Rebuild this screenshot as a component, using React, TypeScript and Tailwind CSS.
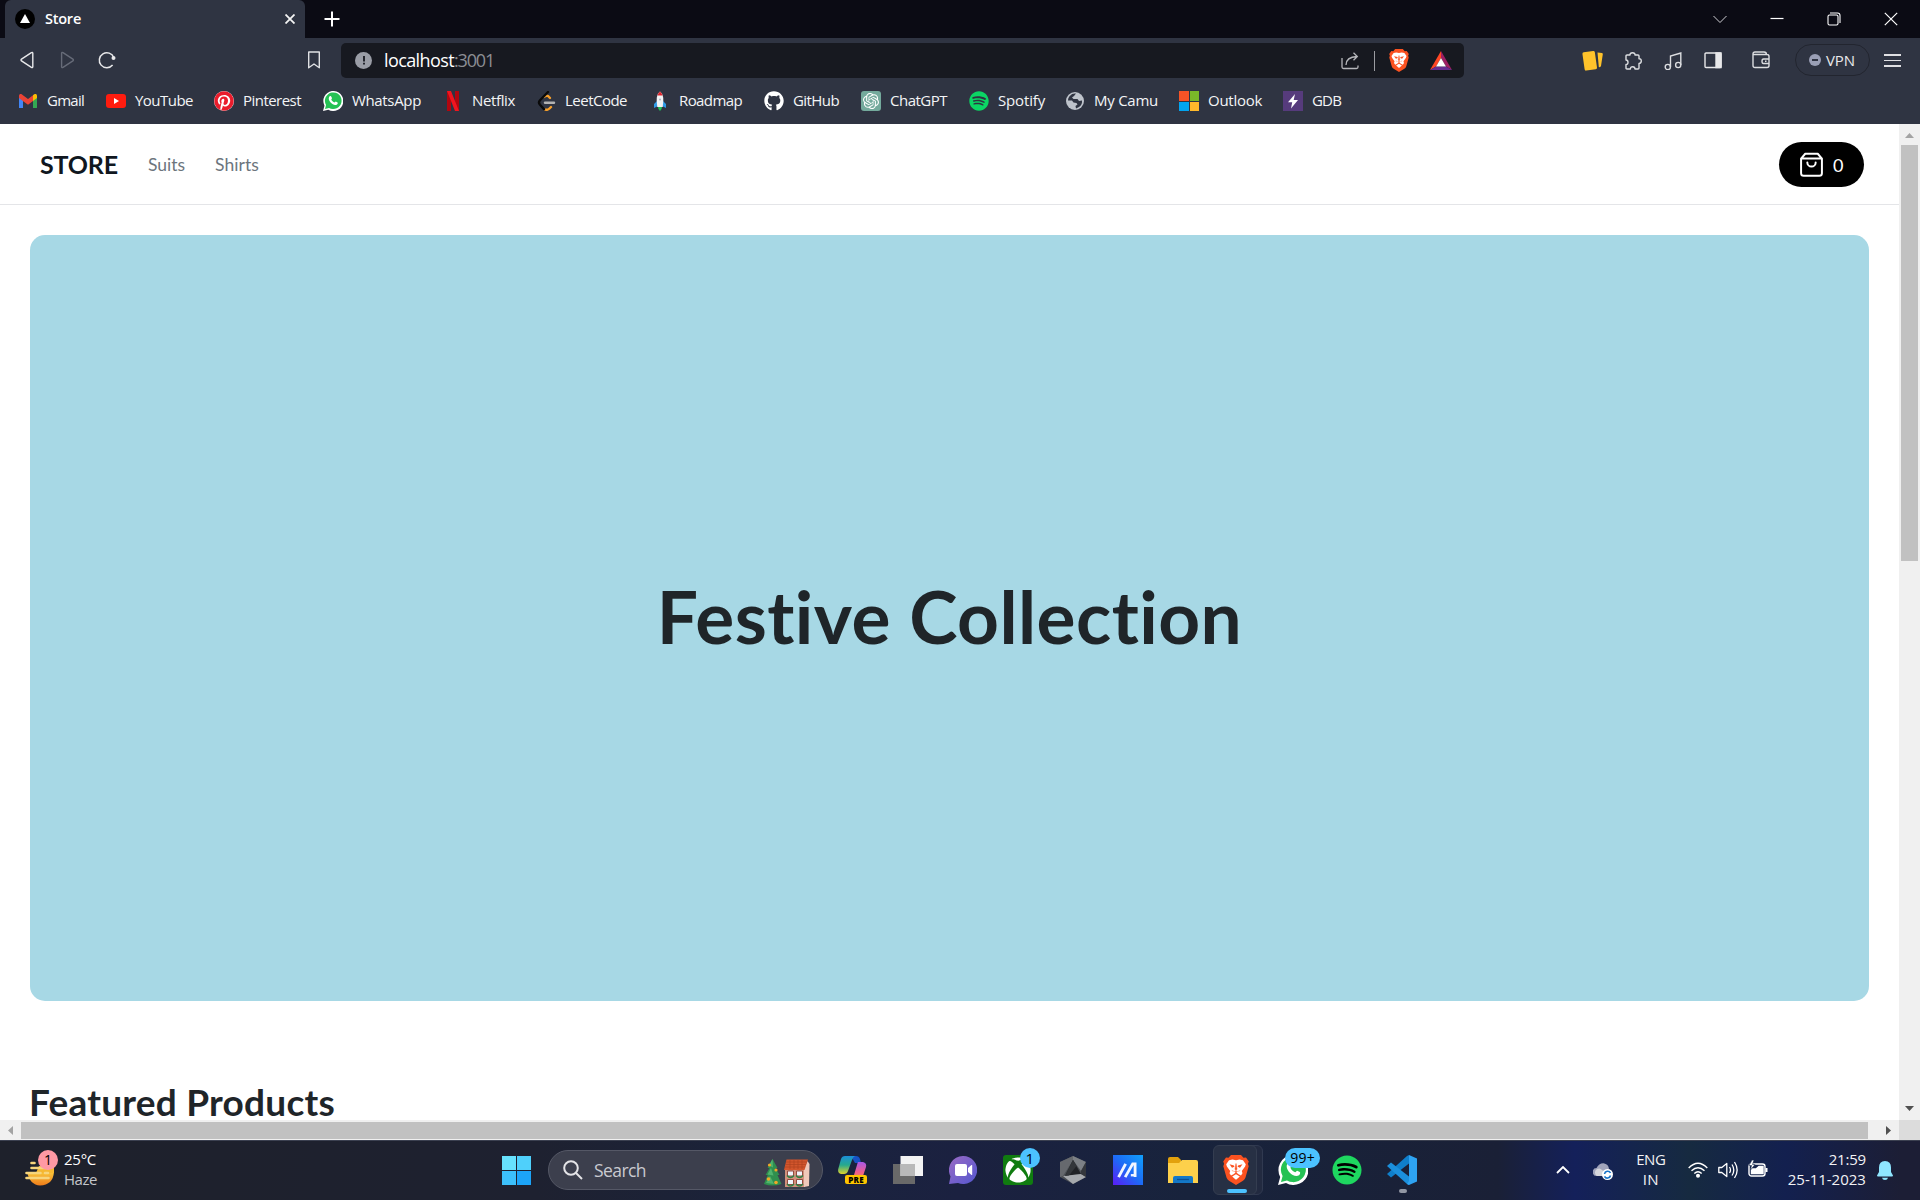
import { useLayoutEffect, useRef } from "react";
import type { ReactNode } from "react";
import { FaGithub, FaSpotify, FaPinterest, FaXbox } from "react-icons/fa";
import { SiOpenai } from "react-icons/si";

/* Tracks a run of text so that it fills the given width. */
function Fit({ w, className = "", children }: { w: number; className?: string; children: string }) {
  const ref = useRef<HTMLSpanElement>(null);
  useLayoutEffect(() => {
    const el = ref.current;
    if (!el) return;
    el.style.letterSpacing = "0px";
    const natural = el.getBoundingClientRect().width;
    el.style.letterSpacing = `${(w - natural) / children.length}px`;
  }, [w, children]);
  return (
    <span ref={ref} className={`inline-block shrink-0 whitespace-nowrap ${className}`}>
      {children}
    </span>
  );
}

function WhatsAppLogo({ className }: { className: string }) {
  return (
    <svg viewBox="0 0 30 30" className={className}>
      <path d="M0 30 2.2 22A15 15 0 1 1 8 28Z" fill="#fff" />
      <path d="M3 27 4.6 21A12.5 12.5 0 1 1 9 25.4Z" fill="#25c254" />
      <path d="M10 8c1-1 2-.7 2.500.5l.9 2c.3.800-.8 1.600-1 2.200.8 2 2.700 3.700 4.800 4.600.7-.1 1.400-1.600 2-1.500l2.600 1.300c.8.500.2 2.400-.8 3.100-3 2-7-.2-9.200-2.500C9.400 15.300 7.200 11 10 8Z" fill="#fff" />
    </svg>
  );
}

function BraveLogo({ className }: { className: string }) {
  return (
    <svg viewBox="0 0 26 30" className={className}>
      <path d="M8 0h10l2.500 2.800 2.500-.3 2.800 4-.9 2.300.8 2.400-3.200 11.300q-.6 2-2.500 3.300L13 30l-7-4.200q-1.900-1.300-2.500-3.300L.3 11.200l.8-2.400-.9-2.300 2.800-4 2.500.3Z" fill="#fb5220" />
      <path d="M13 5.200 16.500 4.500 20 5.200l2.800 4-.7 2.300-3.300 4.500.7 2.200-1.500 2.300-2.500-1.300-2.500-2-2.500 2L8 20.500l-1.500-2.300.7-2.200-3.300-4.500-.7-2.300 2.800-4 3.500-.7Z" fill="#fff" />
      <path d="m13 19.200 3.800 2.300q-2 1.800-3.800 3.300-1.800-1.500-3.800-3.300Z" fill="#fff" />
      <path d="M6.500 9.300 11 10.500l.4 1.200-2.400 1ZM19.500 9.300 15 10.500l-.4 1.200 2.400 1ZM11 16.200h4L13 18Z" fill="#fb5220" />
      <path d="M13 8.500 12 14l1 1.800L14 14ZM8.800 15.500l2 .8M17.200 15.500l-2 .8" fill="#fb5220" stroke="#fb5220" strokeWidth=".5" />
    </svg>
  );
}

const bookmarks: { label: string; cell: string; text: number; icon: ReactNode }[] = [
  {
    label: "Gmail", cell: "w-[88px]", text: 37,
    icon: (
      <svg viewBox="0 0 20 20" className="size-5">
        <path d="M1 17V6l4 3v8Z" fill="#4285f4" />
        <path d="M15 17V9l4-3v10.500q0 .5-.7.5Z" fill="#34a853" />
        <path d="M1 7V5c0-2 1.800-2.400 3-1.500l6 4.600 6-4.600-1 6.500-5 3.800L4.800 10Z" fill="#ea4335" />
        <path d="M15 4.300V10l4-3V5c0-2-1.800-2.400-3-1.500Z" fill="#fbbc04" />
      </svg>
    ),
  },
  {
    label: "YouTube", cell: "w-[108px]", text: 58,
    icon: (
      <svg viewBox="0 0 20 20" className="size-5">
        <rect y="3" width="20" height="14" rx="3" fill="#ff1c0f" />
        <path d="m8 7 5 3-5 3Z" fill="#fff" />
      </svg>
    ),
  },
  {
    label: "Pinterest", cell: "w-[109px]", text: 58,
    icon: <span className="block size-5 rounded-full bg-white"><FaPinterest className="size-5 text-[#ea1c2c]" /></span>,
  },
  { label: "WhatsApp", cell: "w-[120px]", text: 69, icon: <WhatsAppLogo className="size-5" /> },
  {
    label: "Netflix", cell: "w-[93px]", text: 43,
    icon: (
      <svg viewBox="0 0 20 20" className="size-5">
        <path d="M4 0h4v20H4Zm8 0h4v20h-4Z" fill="#b1060f" />
        <path d="M4 0h4l8 20h-4Z" fill="#f0151f" />
      </svg>
    ),
  },
  {
    label: "LeetCode", cell: "w-[114px]", text: 62,
    icon: (
      <svg viewBox="0 0 20 20" className="size-5" fill="none" strokeWidth="2.400" strokeLinecap="round">
        <path d="m14 7-2-2q-2-1-4 1" stroke="#f9a12b" />
        <path d="m15 16-1.500 1.500q-2 2-4.500 1" stroke="#f9a12b" />
        <path d="M12 1 4 9.200q-2 2.300 0 4.600l4 4.300" stroke="#0a0a0a" />
        <path d="M9 11.800h9" stroke="#b3b3b3" />
      </svg>
    ),
  },
  {
    label: "Roadmap", cell: "w-[114px]", text: 63,
    icon: (
      <svg viewBox="0 0 20 20" className="size-5">
        <path d="m7 10-3 3v4l3-1.500ZM13 10l3 3v4l-3-1.500Z" fill="#2f9be8" />
        <path d="M10 .5c2.500 2 3.500 5 3.300 9L12.800 16H7.200l-.5-6.500c-.2-4 .8-7 3.300-9Z" fill="#f1f3f5" />
        <path d="M10 .5q1.800 1.500 2.600 4H7.400q.8-2.500 2.600-4Z" fill="#e0262d" />
        <circle cx="10" cy="8.500" r="1" fill="#aab4c0" />
        <path d="M8 16h4q0 2.500-2 4-2-1.500-2-4Z" fill="#21c45a" />
      </svg>
    ),
  },
  { label: "GitHub", cell: "w-[97px]", text: 46, icon: <FaGithub className="size-5 text-white" /> },
  {
    label: "ChatGPT", cell: "w-[108px]", text: 57,
    icon: (
      <span className="flex size-5 items-center justify-center rounded-[3px] bg-[#74aa9c]">
        <SiOpenai className="size-4 text-white" />
      </span>
    ),
  },
  {
    label: "Spotify", cell: "w-[96px]", text: 47,
    icon: <FaSpotify className="size-5 text-[#0bd664]" />,
  },
  {
    label: "My Camu", cell: "w-[114px]", text: 64,
    icon: (
      <svg viewBox="0 0 20 20" className="size-5">
        <circle cx="10" cy="10" r="9" fill="#bec3cb" />
        <path d="M3 9.500Q3 6 6 4l1-1q2-.8 4-.5L9 5 7 6.500 8.500 8h4l1.500 2 3-.5q.5 4-3 6.500l-3 1.500-.5-2.500 2-1.500-1-1.500-3-.5L7 9.500Z" fill="#2f3442" />
      </svg>
    ),
  },
  {
    label: "Outlook", cell: "w-[104px]", text: 54,
    icon: (
      <span className="grid size-5 grid-cols-2 gap-[1px]">
        <span className="bg-[#f65326]" /><span className="bg-[#7ab929]" />
        <span className="bg-[#02a4ef]" /><span className="bg-[#ffb92b]" />
      </span>
    ),
  },
  {
    label: "GDB", cell: "w-[80px]", text: 29,
    icon: (
      <span className="flex size-5 items-center justify-center bg-[#563b7c]">
        <svg viewBox="0 0 20 20" className="size-5" fill="#fff"><path d="M12 3 5 11.300h4.200L8 17.500l7-8.500h-4.300Z" /></svg>
      </span>
    ),
  },
];

function TitleBar() {
  return (
    <div className="flex h-[38px] items-center bg-[#0b0b14]">
      <div className="ml-[5px] flex h-full w-[300px] items-center rounded-t-md bg-[#2f3442]">
        <span className="ml-[10px] flex size-5 items-center justify-center rounded-full bg-black">
          <svg viewBox="0 0 10 9" className="mb-0.5 h-[9px] w-[10px]" fill="#fff"><path d="m5 0 5 9H0Z" /></svg>
        </span>
        <Fit w={36} className="ml-[10px] text-[14.500px] leading-5 font-semibold text-white">Store</Fit>
        <svg viewBox="0 0 10 10" className="mr-[10px] ml-auto size-[10px]" stroke="#f3f3f3" strokeWidth="1.800"><path d="m.5.5 9 9m0-9-9 9" /></svg>
      </div>
      <svg viewBox="0 0 16 16" className="ml-[19px] size-4" stroke="#fff" strokeWidth="2"><path d="M8 .5v15M.5 8h15" /></svg>
      <div className="mr-[22px] ml-auto flex items-center gap-[43px]">
        <svg viewBox="0 0 14 14" className="size-[14px]" fill="none" stroke="#d0d0d3"><path d="m.5 4 6.500 6.500L13.500 4" /></svg>
        <svg viewBox="0 0 14 14" className="size-[14px]" stroke="#fff" strokeWidth="1.200"><path d="M.5 6.500h13" /></svg>
        <svg viewBox="0 0 14 14" className="size-[14px]" fill="none" stroke="#fff" strokeWidth="1.100">
          <rect x="1" y="3" width="10" height="10" rx="1.500" /><path d="M3 1h7.500Q13 1 13 3.500V11" />
        </svg>
        <svg viewBox="0 0 14 14" className="size-[14px]" stroke="#fff" strokeWidth="1.200"><path d="m.8.8 12.400 12.400m0-12.400L.8 13.200" /></svg>
      </div>
    </div>
  );
}

function Toolbar() {
  return (
    <div className="flex h-[45px] items-center bg-[#2f3442]">
      <svg viewBox="0 0 18 18" className="mb-px ml-[18px] size-[18px]" fill="none" stroke="#e8e8ea" strokeWidth="1.400" strokeLinejoin="round"><path d="M14.800 2.200v13.600q-.2 1.200-1.400.600L3.500 9.900q-1-.9 0-1.800l9.900-6.500q1.200-.6 1.400.6Z" /></svg>
      <svg viewBox="0 0 18 18" className="mb-px ml-[22px] size-[18px]" fill="none" stroke="#666b78" strokeWidth="1.400" strokeLinejoin="round"><path d="M3.600 2.200v13.600q.2 1.200 1.400.600l9.900-6.500q1-.9 0-1.800L5 1.600Q3.800 1 3.600 2.200Z" /></svg>
      <svg viewBox="0 0 18 18" className="mb-px ml-[22px] size-[18px]" fill="none" stroke="#e8e8ea" strokeWidth="1.500"><path d="M14.600 14a7.500 7.500 0 1 1 1.200-7.500" /><circle cx="15.500" cy="7" r="2" fill="#e8e8ea" stroke="none" /></svg>
      <svg viewBox="0 0 12 18" className="mb-px ml-[192px] h-[18px] w-3" fill="none" stroke="#e0e1e4" strokeWidth="1.400" strokeLinejoin="round"><path d="M.7 1h10.600v15.800L6 13 .7 16.800Z" /></svg>
      <div className="ml-[21px] flex h-[35px] w-[1123px] items-center rounded-[5px] bg-[#171920]">
        <span className="ml-[14px] flex size-[17px] items-center justify-center rounded-full bg-[#9a9da6]">
          <svg viewBox="0 0 4 10" className="h-[9px] w-1" fill="#171920"><path d="M1 0h2v6H1ZM1 7.500h2v2H1Z" /></svg>
        </span>
        <Fit w={70} className="mb-px ml-3 text-[18px] leading-6 text-white">localhost</Fit>
        <Fit w={40} className="mb-px text-[18px] leading-6 text-[#8b8d93]">:3001</Fit>
        <svg viewBox="0 0 18 18" className="ml-auto size-[18px]" fill="none" stroke="#b5b6ba" strokeWidth="1.300">
          <path d="M1 6v9q0 1.500 1.500 1.500h13Q17 16.500 17 15v-1.500M5 13q0-8 11-8.500M12.500.8 16.300 4.500l-3.800 3.700" />
        </svg>
        <span className="ml-[15px] h-5 w-px bg-[#9b9ca1]" />
        <BraveLogo className="ml-[14px] h-[23px] w-5" />
        <svg viewBox="0 0 22 19" className="mr-[12px] ml-[21px] h-[19px] w-[22px]">
          <path d="M11 0 0 19l6-3.500L11 7Z" fill="#ff4724" /><path d="m11 0 11 19-6-3.500L11 7Z" fill="#9e1f63" />
          <path d="M0 19h22l-6-3.500H6Z" fill="#662d91" /><path d="m11 7 5 8.500H6Z" fill="#fff" />
        </svg>
      </div>
      <svg viewBox="0 0 22 22" className="ml-[118px] size-[22px]" fill="#ffc32b">
        <rect x="1.500" y="1.500" width="12.500" height="18.500" rx="1.500" transform="rotate(-8 8 11)" />
        <path d="M15.500 2.500 20 3q1 .2.800 1.200L19 16q-.5 1.500-2.200 1Z" />
      </svg>
      <svg viewBox="0 0 18 18" className="ml-5 size-[18px]" fill="none" stroke="#dcdde0" strokeWidth="1.400" strokeLinejoin="round">
        <path d="M2 4q0-1 1-1h3q-.2-2.200 2.500-2.200T11 3h3q1 0 1 1v2.800q2.300-.1 2.300 2.300T15 11.500V16q0 1-1 1h-3q0-2.200-2.300-2.200T6.400 17H3q-1 0-1-1v-3.500q2 0 2-2.200T2 8Z" />
      </svg>
      <svg viewBox="0 0 18 18" className="ml-[22px] size-[18px]" fill="none" stroke="#dcdde0" strokeWidth="1.400"><path d="M6.500 15V4l10.300-3v12" /><circle cx="3.800" cy="15" r="2.600" /><circle cx="14.200" cy="13" r="2.600" /></svg>
      <svg viewBox="0 0 18 18" className="mb-px ml-[22px] size-[18px]" fill="none" stroke="#e8e8ea" strokeWidth="1.400"><rect x="1" y="2" width="16" height="14.500" rx="1" /><path d="M12 2h5v14.500h-5Z" fill="#e8e8ea" /></svg>
      <svg viewBox="0 0 18 18" className="mb-px ml-[30px] size-[18px]" fill="none" stroke="#dcdde0" strokeWidth="1.400">
        <path d="M1 3q0-2 2-2h9q2.500 0 2.500 2.500M1 3.500h14q2 0 2 2v9q0 2-2 2H3q-2 0-2-2ZM17 8h-5.500Q10 8 10 10.200t1.500 2.300H17Zm-4 2.200h1.500" />
      </svg>
      <div className="mb-px ml-[25px] flex h-8 w-[75px] items-center rounded-full border border-[#22252f]">
        <span className="ml-[13px] flex size-3 items-center justify-center rounded-full bg-[#9a9fb5]"><span className="h-[1.500px] w-1.5 bg-[#2f3442]" /></span>
        <Fit w={29} className="mb-px ml-[5px] text-[15px] leading-5 text-[#e9e9eb]">VPN</Fit>
      </div>
      <div className="ml-[14px] flex w-[17px] flex-col gap-1">
        <span className="h-[1.500px] bg-[#e0e0e3]" /><span className="h-[1.500px] bg-[#e0e0e3]" /><span className="h-[1.500px] bg-[#e0e0e3]" />
      </div>
    </div>
  );
}

function Bookmarks() {
  return (
    <div className="flex h-[41px] bg-[#2f3442] pt-2 pl-[18px]">
      {bookmarks.map((b) => (
        <div key={b.label} className={`flex h-5 shrink-0 items-center gap-[10px] ${b.cell}`}>
          <span className="flex size-5 shrink-0 items-center justify-center">{b.icon}</span>
          <Fit w={b.text} className="-ml-px mb-[2px] text-[15px] leading-5 text-[#f4f4f6]">{b.label}</Fit>
        </div>
      ))}
    </div>
  );
}

function StorePage() {
  return (
    <main className="h-[996px] flex-1 overflow-hidden bg-white font-['Lato',sans-serif]">
      <header className="flex h-[81px] items-center border-b border-[#e4e5e8] pr-[35px] pl-[40px]">
        <Fit w={78} className="text-[25px] leading-8 font-bold text-[#10171f]">STORE</Fit>
        <Fit w={37} className="mt-[2px] ml-[30px] text-[17.500px] leading-6 text-[#6c757d]">Suits</Fit>
        <Fit w={44} className="mt-[2px] ml-[30px] text-[17.500px] leading-6 text-[#6c757d]">Shirts</Fit>
        <button className="ml-auto flex h-[45px] w-[85px] items-center rounded-full bg-black pl-[20px] text-white">
          <svg viewBox="0 0 24 24" className="size-[25px]" fill="none" stroke="#fff" strokeWidth="1.900" strokeLinecap="round" strokeLinejoin="round">
            <path d="M6 1.700h12l4 4.600v14a2.500 2.500 0 0 1-2.500 2.500h-15A2.500 2.500 0 0 1 2 20.300v-14ZM2 6.300h20M16 10a4 4 0 0 1-8 0" />
          </svg>
          <Fit w={11} className="mt-px ml-[9px] text-[18px] leading-6">0</Fit>
        </button>
      </header>
      <section className="mx-[30px] mt-[30px] flex h-[766px] items-center justify-center rounded-[15px] bg-[#a7d8e5]">
        <Fit w={588} className="mb-1 text-[73px] leading-[80px] font-bold text-[#1f2529]">Festive Collection</Fit>
      </section>
      <h2 className="mt-[83px] ml-[29px] h-[35px] leading-[35px] text-[#1f2529]">
        <Fit w={306} className="text-[37px] font-bold">Featured Products</Fit>
      </h2>
    </main>
  );
}

function VerticalScrollbar() {
  return (
    <div className="flex w-[21px] flex-col items-center bg-[#f0f0f0]">
      <svg viewBox="0 0 9 5" className="mt-[9px] h-[5px] w-[9px]" fill="#a3a3a3"><path d="m4.500 0 4.500 5H0Z" /></svg>
      <div className="mt-[7px] h-[416px] w-[17px] bg-[#c1c1c1]" />
      <svg viewBox="0 0 9 5" className="mt-auto mb-[9px] h-[5px] w-[9px]" fill="#505050"><path d="M0 0h9L4.500 5Z" /></svg>
    </div>
  );
}

function HorizontalScrollbar() {
  return (
    <div className="flex h-5 items-center bg-[#f0f0f0]">
      <svg viewBox="0 0 5 9" className="ml-2 h-[9px] w-[5px]" fill="#a3a3a3"><path d="M5 0v9L0 4.500Z" /></svg>
      <div className="mt-px ml-2 h-[17px] w-[1847px] bg-[#c1c1c1]" />
      <svg viewBox="0 0 5 9" className="ml-[18px] h-[9px] w-[5px]" fill="#505050"><path d="M0 0v9l5-4.500Z" /></svg>
      <div className="ml-auto h-full w-[21px] bg-[#dcdcdc]" />
    </div>
  );
}

function TreeAndHouse() {
  return (
    <svg viewBox="0 0 48 32" className="h-8 w-12">
      <path d="M9.500 2 4.500 11h2l-4 7h2.200L1 27q8 3 17.500 0L14.500 18h2L12.500 11h2Z" fill="#2f8f4e" />
      <path d="M9.500 2 6 8.500l4 2ZM8 11l-3.500 6.500 6 1ZM7 19l-4 7 8 1Z" fill="#4fb36d" />
      <g fill="#f0a728"><circle cx="6.500" cy="8" r="1.600" /><circle cx="13" cy="13" r="1.600" /><circle cx="5.500" cy="22" r="1.800" /><circle cx="13" cy="25.500" r="1.800" /></g>
      <path d="M22 12h20v18H22Z" fill="#d0917c" />
      <path d="m41 12 3.500-8 2 3-.5 22-5 1Z" fill="#efc8ba" />
      <path d="M23.500 2.500H45L41.500 13H21Z" fill="#d2552c" />
      <path d="M23 5h21M22.500 7.500h20.500M22 10h20M27 3v9M31 3v9M35 3v9M39 3v9" stroke="#b04420" strokeWidth=".7" />
      <g fill="#eef4fb" stroke="#8c3c33" strokeWidth=".9"><path d="M24.500 14h6v5h-6ZM33.500 14h6v5h-6ZM24.500 22.500h6v5h-6ZM33.500 22.500h6v5h-6Z" /></g>
      <path d="M24 18.500q3.500 4 7 0M33 18.500q3.500 4 7 0M24 27q3.500 4 7 0M33 27q3.500 4 7 0" fill="none" stroke="#2f8247" strokeWidth="1.500" />
    </svg>
  );
}

function Cell({ children }: { children: ReactNode }) {
  return <div className="relative flex h-[60px] w-[54.900px] shrink-0 items-center justify-center">{children}</div>;
}

function Taskbar() {
  return (
    <footer className="flex h-[60px] items-center border-t border-[#3b4050] bg-[linear-gradient(90deg,#1e212b_0%,#1e2130_28%,#1a233d_42%,#1b2140_50%,#18233c_62%,#1a2036_78%,#14205a_82%,#162a40_88%,#13204f_93%,#1c1e35_99%)] pb-px">
      <div className="relative ml-6 size-[38px]">
        <svg viewBox="0 0 38 38" className="size-[38px]">
          <defs><linearGradient id="sun" x2="0" y2="1"><stop stopColor="#f8c73b" /><stop offset="1" stopColor="#ef7c1a" /></linearGradient></defs>
          <path d="M3 21h27q-1 13-14 13.500Q6 34 3 21Z" fill="url(#sun)" />
          <path d="M15 15h15v7H12Z" fill="#f5b731" />
          <path d="M7.500 12h3M7.500 17h16M2.500 22h14m4.500 0h3M2.500 27h22" stroke="#f7d57c" strokeWidth="2.600" strokeLinecap="round" />
        </svg>
        <span className="absolute -top-px left-[14px] flex size-5 items-center justify-center rounded-full bg-[#ff99a4] text-[14px] leading-5 text-black">1</span>
      </div>
      <div className="mb-[3px] ml-[2px] flex w-[60px] flex-col items-start">
        <Fit w={32} className="text-[15px] leading-5 text-white">25°C</Fit>
        <Fit w={33} className="text-[15px] leading-5 text-[#c4c6cb]">Haze</Fit>
      </div>
      <div className="ml-[378px] grid size-[29px] grid-cols-2 gap-px">
        <span className="bg-[#67e2fd]" /><span className="bg-[#4fd0fb]" /><span className="bg-[#3cc0fb]" /><span className="bg-[#1ca4f8]" />
      </div>
      <div className="ml-[17px] flex h-10 w-[275px] items-center rounded-full border border-[#555866] bg-[#3c3f4d]">
        <svg viewBox="0 0 20 20" className="ml-[14px] size-5" fill="none" stroke="#e4e4e7" strokeWidth="2"><circle cx="8" cy="8" r="6.800" /><path d="m13 13 6 6" /></svg>
        <Fit w={52} className="mb-px ml-[11px] text-[17.500px] leading-6 text-[#c9cad0]">Search</Fit>
        <span className="mt-1.5 mr-[11px] ml-auto"><TreeAndHouse /></span>
      </div>
      <div className="ml-[3px] flex">
        <Cell>
          <svg viewBox="0 0 30 28" className="h-7 w-[30px]">
            <defs>
              <linearGradient id="cpa" x2="0" y2="1"><stop stopColor="#1b8ed8" /><stop offset=".5" stopColor="#26a98d" /><stop offset="1" stopColor="#dfd22b" /></linearGradient>
              <linearGradient id="cpb" x2="0" y2="1"><stop stopColor="#a558e8" /><stop offset=".6" stopColor="#ee5e8d" /><stop offset="1" stopColor="#f38a50" /></linearGradient>
            </defs>
            <path d="M13 0h5q3 0 4 3l1 4h-6Z" fill="#1652c4" />
            <path d="M7 0h10q-2 1-3 4l-4 11q-1 3-4 3H3q-4-1-2.500-6L3 3q1-3 4-3Z" fill="url(#cpa)" />
            <path d="M20 6h5q4 1 3 5l-3 9q-1 3-4 3h-8q2-1 3-4l3-10q.5-2 1-3Z" fill="url(#cpb)" />
          </svg>
          <span className="absolute top-[35px] left-[19px] flex h-[9px] w-[22px] items-center justify-center rounded-[2px] bg-[#fdc500] text-[8px] leading-[9px] font-extrabold tracking-wide text-black">PRE</span>
        </Cell>
        <Cell>
          <svg viewBox="0 0 30 28" className="h-7 w-[30px]"><path d="M0 8h22v20H0Z" fill="#696969" /><path d="M7.500 0H30v20H7.500Z" fill="#f3f3f3" /><path d="M7.500 8H22v12H7.500Z" fill="#b9b9b9" /></svg>
        </Cell>
        <Cell>
          <svg viewBox="0 0 28 28" className="size-7">
            <defs><linearGradient id="chat" x1="0" y1="0" x2="1" y2="1"><stop stopColor="#9a6ac4" /><stop offset="1" stopColor="#5457d0" /></linearGradient></defs>
            <path d="M14 0a14 14 0 1 1-5 27L0 28l1.500-7.500A14 14 0 0 1 14 0Z" fill="url(#chat)" />
            <rect x="6" y="8" width="12" height="12" rx="2" fill="#fff" /><path d="m19 12 3.500-3q.7-.3.700.5v9q0 .8-.7.5L19 16Z" fill="#fff" />
          </svg>
        </Cell>
        <Cell>
          <span className="flex size-[30px] items-center justify-center rounded-[3px] bg-[#107c10]"><FaXbox className="size-[26px] text-white" /></span>
          <span className="absolute top-[8px] left-[29px] flex size-5 items-center justify-center rounded-full bg-[#4cc2ff] text-[15px] leading-5 text-black">1</span>
        </Cell>
        <Cell>
          <svg viewBox="0 0 26 28" className="h-7 w-[26px]">
            <path d="m13 0 13 6v15l-13 7-13-7V6Z" fill="#4c5055" /><path d="m13 0 13 6-5 9-8-11Z" fill="#7c8085" /><path d="m0 6 13-6v4L3 20l-3 1Z" fill="#66696e" />
            <path d="m13 4 8 14-16 2Z" fill="#202226" /><path d="m3 20 18-2 5 3-13 7Z" fill="#a6a9ad" /><path d="m21 15 5-9v15l-5-3Z" fill="#34373c" /><path d="m13 4 3.500 6L9 19.500l-4 .5Z" fill="#33363a" />
          </svg>
        </Cell>
        <Cell>
          <span className="flex size-[30px] items-center justify-center bg-[linear-gradient(45deg,#5b1cf5,#1d6bf6_50%,#10a0fb)]">
            <svg viewBox="0 0 24 18" className="h-[17px] w-6" fill="none" stroke="#f0f6ff" strokeWidth="3"><path d="M2 16 9.500 2M9 16 17 2h2.500v14" /><path d="M15 14h4" strokeWidth="2.500" /></svg>
          </span>
        </Cell>
        <Cell>
          <svg viewBox="0 0 30 27" className="h-[27px] w-[30px]">
            <path d="M0 2q0-2 2-2h8l3 3v4H0Z" fill="#e2a10d" /><path d="M0 6h11l3-3h14q2 0 2 2v21H0Z" fill="#fdd04b" />
            <path d="M5 21q0-2 2-2h16q2 0 2 2v5H5Z" fill="#1478c8" /><path d="M9 22.500h12" stroke="#0a4f95" strokeWidth="1.300" />
          </svg>
        </Cell>
        <Cell>
          <span className="absolute top-[5px] left-[9px] h-[50px] w-[44px] rounded-r-md border border-[#303950] bg-[#222a40]" />
          <span className="absolute top-[5px] left-[3px] h-[50px] w-[44px] rounded-md border border-[#343d50] bg-[#273044]" />
          <span className="relative mr-[4px]"><BraveLogo className="h-[30px] w-[26px]" /></span>
          <span className="absolute top-[49px] left-[17px] h-1 w-5 rounded-full bg-[#4cc2ff]" />
        </Cell>
        <Cell>
          <WhatsAppLogo className="size-[30px]" />
          <span className="absolute top-[8px] left-[20px] flex h-5 w-[35px] items-center justify-center rounded-full bg-[#4cc2ff] text-black"><Fit w={25} className="text-[14px] leading-5">99+</Fit></span>
        </Cell>
        <Cell><span className="flex size-7 items-center justify-center rounded-full bg-black"><FaSpotify className="size-[30px] shrink-0 text-[#1ed760]" /></span></Cell>
        <Cell>
          <svg viewBox="0 0 30 30" className="size-[30px]">
            <path d="m22 8.500-18 14L0 19l20-18 2-1Z" fill="#0f7fcb" /><path d="m22 21.500-18-14L0 11l20 18 2 1Z" fill="#1b8fdc" />
            <path d="m22 0 8 3.500v23L22 30l-2-1 2-3Z" fill="#2ea3f2" />
          </svg>
          <span className="absolute top-[49px] left-[24px] h-1 w-2 rounded-full bg-[#9297a3]" />
        </Cell>
      </div>
      <svg viewBox="0 0 14 8" className="mb-px ml-[126px] h-2 w-[14px]" fill="none" stroke="#fff" strokeWidth="1.800"><path d="m1 7 6-6 6 6" /></svg>
      <svg viewBox="0 0 20 18" className="mt-[2px] ml-[23px] h-[18px] w-5">
        <path d="M4 14a4 4 0 0 1-.5-8Q6 1 10.500 1.200 15.500 2 16 7q3 1 3 4l-2 3Z" fill="#a0a4bb" /><path d="M4 14a4 4 0 0 1 0-7q3-1.500 5 1l8 6Z" fill="#d5d6dc" />
        <circle cx="14.500" cy="12.500" r="5.500" fill="#fff" /><path d="M11.500 12a3.200 3.200 0 0 1 6-1m0 2.500a3.200 3.200 0 0 1-6 .8" fill="none" stroke="#1673c9" strokeWidth="1.600" />
      </svg>
      <div className="mb-[2px] ml-[23px] flex w-[30px] flex-col items-center">
        <Fit w={29} className="text-[15px] leading-5 text-[#f2f2f4]">ENG</Fit>
        <Fit w={16} className="text-[15px] leading-5 text-[#f2f2f4]">IN</Fit>
      </div>
      <svg viewBox="0 0 20 16" className="ml-[22px] h-4 w-5" fill="none" stroke="#fff" strokeWidth="1.400"><path d="M.7 6Q10-3.500 19.300 6M3.500 8.800q6.500-6.300 13 0M6.300 11.500q3.700-3.500 7.400 0" /><circle cx="10" cy="13.700" r="1.300" fill="#fff" /></svg>
      <svg viewBox="0 0 20 18" className="ml-[10px] h-[18px] w-5" fill="none" stroke="#fff" strokeWidth="1.300" strokeLinejoin="round"><path d="M.8 6.500v5h3l5 4v-13l-5 4ZM11.500 6q2 3 0 6M14 3.500q3.600 5.500 0 11M16.500 1q5.300 8 0 16" /></svg>
      <svg viewBox="0 0 20 18" className="mb-[3px] ml-[10px] h-[18px] w-5" fill="none" stroke="#fff" strokeWidth="1.400"><rect x="1" y="4" width="16" height="12" rx="2.500" /><path d="M3.500 13.500V9H8l3-2.500h4v7Z" fill="#fff" /><path d="M18.500 8v4" strokeWidth="2" /><path d="M4 0 1 5.500h2.500L2.500 10 7 4.500H4.500L6 0Z" fill="#fff" stroke="#16294a" strokeWidth=".6" /></svg>
      <div className="mb-[3px] ml-[19px] flex w-[79px] flex-col items-end">
        <Fit w={37} className="text-[15px] leading-5 text-[#f2f2f4]">21:59</Fit>
        <Fit w={78} className="text-[15px] leading-5 text-[#f2f2f4]">25-11-2023</Fit>
      </div>
      <svg viewBox="0 0 16 19" className="ml-[11px] h-[19px] w-4" fill="#8fe6ff"><path d="M8 0q6 .3 6 6.500V11l2 3.500q0 1-1 1H1q-1 0-1-1L2 11V6.500Q2 .3 8 0ZM5 16.700h6q-.5 2.300-3 2.300t-3-2.300Z" /></svg>
    </footer>
  );
}

export default function App() {
  return (
    <div className="flex h-[1200px] w-[1920px] flex-col overflow-hidden bg-white font-['Open_Sans','Noto_Sans',sans-serif]">
      <TitleBar />
      <Toolbar />
      <Bookmarks />
      <div className="flex h-[996px]">
        <StorePage />
        <VerticalScrollbar />
      </div>
      <HorizontalScrollbar />
      <Taskbar />
    </div>
  );
}
